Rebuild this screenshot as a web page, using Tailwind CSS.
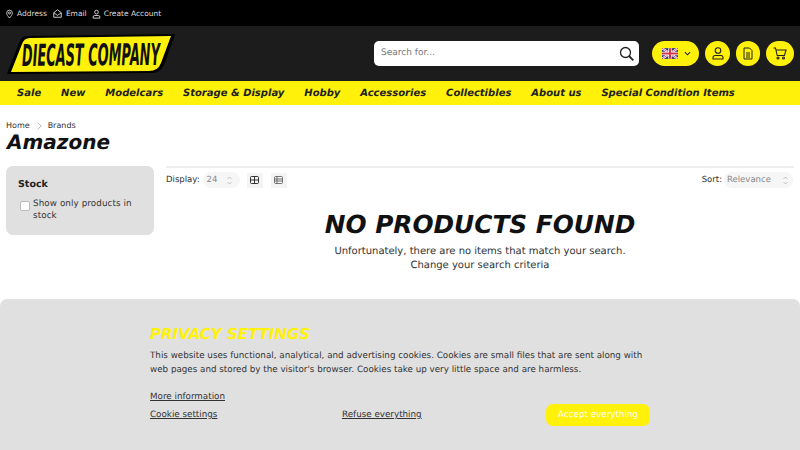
<!DOCTYPE html>
<html><head><meta charset="utf-8"><script src="https://cdn.jsdelivr.net/npm/@tailwindcss/browser@4"></script></head>
<body class="w-[800px] h-[450px] overflow-hidden relative bg-white text-[#222] font-['DejaVu_Sans',sans-serif] [text-rendering:geometricPrecision]">
<div class="h-[26px] bg-black flex items-center pl-[6px] pt-[1px] text-[7.500px] text-[#ddd]">
  <svg class="w-[7px] h-[10px]" viewBox="0 0 10 13" fill="none" stroke="#ddd" stroke-width="1.200"><path d="M5 12.300C3 9.800 1 7.600 1 5a4 4 0 0 1 8 0c0 2.600-2 4.800-4 7.300z"/><circle cx="5" cy="5" r="1.500"/></svg>
  <span class="ml-[4px]">Address</span>
  <svg class="ml-[6px] w-[9px] h-[9px]" viewBox="0 0 12 12" fill="none" stroke="#ddd" stroke-width="1.200"><path d="M1 5l5-4 5 4v6H1z"/><path d="M1 5l5 3.500L11 5"/></svg>
  <span class="ml-[4px]">Email</span>
  <svg class="ml-[5px] w-[9px] h-[10px]" viewBox="0 0 12 12" fill="none" stroke="#ddd" stroke-width="1.200"><circle cx="6" cy="3.500" r="2.500"/><path d="M1.500 11.500V10a2 2 0 0 1 2-2h5a2 2 0 0 1 2 2v1.500z"/></svg>
  <span class="ml-[3px]">Create Account</span>
</div>
<div class="h-[55px] bg-[#1c1c1c] flex items-center pl-[7px] pr-[6px]">
  <svg class="w-[170px] h-[42px] shrink-0 mt-[1px]" viewBox="0 0 170 42">
    <path d="M20 3L168 1L157 32Q153 40 145 40L0 41L12 10Q14 3 20 3Z" fill="#000"/>
    <path d="M23 5L164 3L154 30Q151 38 142 38L4 39L15 11Q17 5 23 5Z" fill="#fff10a"/>
    <text x="0" y="0" transform="translate(15 33) rotate(-0.5) scale(0.43 1)" font-family="DejaVu Sans" font-size="30" font-weight="bold" font-style="italic" fill="#111">DIECAST COMPANY</text>
  </svg>
  <div class="ml-[197px] w-[265px] h-[25px] rounded-[5px] bg-white flex items-center justify-between pl-[7px] pr-[5px] text-[9px] text-[#777]">
    <span class="pt-[1px]">Search for...</span>
    <svg class="w-[15px] h-[15px]" viewBox="0 0 15 15" fill="none" stroke="#222" stroke-width="1.300"><circle cx="6.500" cy="6.500" r="5"/><path d="M10 10l4.300 4.300" stroke-width="1.800"/></svg>
  </div>
  <div class="ml-[13px] w-[47px] h-[25px] rounded-full bg-[#fff10a] flex items-center pl-[10px] gap-[6px]">
    <svg class="w-[16px] h-[11px]" viewBox="0 0 60 40"><rect width="60" height="40" fill="#27337a"/><path d="M0 0L60 40M60 0L0 40" stroke="#fff" stroke-width="8"/><path d="M0 0L60 40M60 0L0 40" stroke="#d03a4e" stroke-width="3"/><path d="M30 0V40M0 20H60" stroke="#fff" stroke-width="13"/><path d="M30 0V40M0 20H60" stroke="#d03a4e" stroke-width="8"/></svg>
    <svg class="w-[7px] h-[5px]" viewBox="0 0 8 5" fill="none" stroke="#222" stroke-width="1.200"><path d="M1 1l3 3 3-3"/></svg>
  </div>
  <div class="ml-[6px] w-[25px] h-[25px] rounded-full bg-[#fff10a] flex items-center justify-center"><svg class="w-[12px] h-[13px]" viewBox="0 0 12 13" fill="none" stroke="#222" stroke-width="1.100"><circle cx="6" cy="3.500" r="2.800"/><path d="M1 12V10.500a2 2 0 0 1 2-2h6a2 2 0 0 1 2 2V12z"/></svg></div>
  <div class="ml-[6px] w-[24px] h-[25px] rounded-full bg-[#fff10a] flex items-center justify-center"><svg class="w-[10px] h-[13px]" viewBox="0 0 10 13" fill="none" stroke="#222" stroke-width="1"><path d="M1 1h5.500L9 3.500V12H1zM3 6h4M3 8h4M3 10h4"/></svg></div>
  <div class="ml-[6px] w-[28px] h-[25px] rounded-full bg-[#fff10a] flex items-center justify-center"><svg class="w-[14px] h-[13px]" viewBox="0 0 14 13" fill="none" stroke="#222" stroke-width="1.100"><path d="M.5 1h2l1.700 7.500h7.300L13 3H3"/><circle cx="5" cy="11" r="1"/><circle cx="10.500" cy="11" r="1"/></svg></div>
</div>
<nav class="h-[24px] bg-[#fff10a] flex items-center pl-[17px] pt-[1px] gap-[19.900px] text-[10px] font-bold italic text-[#222] whitespace-nowrap">
  <span>Sale</span><span>New</span><span>Modelcars</span><span>Storage &amp; Display</span><span>Hobby</span><span>Accessories</span><span>Collectibles</span><span>About us</span><span>Special Condition Items</span>
</nav>
<div class="pl-[6px] pr-[6px]">
  <div class="h-[12px] mt-[14px] flex items-center gap-[6px] text-[8px] text-[#333] pt-[1px]"><span>Home</span><svg class="w-[5px] h-[8px] ml-[1px]" viewBox="0 0 6 9" fill="none" stroke="#aaa"><path d="M1 .5l4 4-4 4"/></svg><span>Brands</span></div>
  <h1 class="text-[20px] leading-[24px] -mt-[1px] font-bold italic text-[#111] pl-[1px]">Amazone</h1>
  <div class="flex gap-[12px] mt-[12px]">
    <aside class="w-[148px] h-[69px] shrink-0 rounded-[7px] bg-[#e0e0e0] pl-[12px] pt-[12px]">
      <div class="text-[9.500px] font-bold leading-[14px] text-[#222]">Stock</div>
      <div class="flex mt-[7px] pl-[2px] text-[8.750px] leading-[11px] text-[#333]">
        <span class="w-[10px] h-[10px] mt-[2px] rounded-[2px] bg-white border border-[#bbb] shrink-0 mr-[3px]"></span>
        <span class="w-[100px] leading-[11.500px] tracking-[0.1px]">Show only products in stock</span>
      </div>
    </aside>
    <main class="flex-1">
      <div class="border-t-2 border-[#eee] h-[26px] flex items-center justify-between text-[8.500px] text-[#333]">
        <div class="flex items-center">
          <span>Display:</span>
          <div class="ml-[3px] w-[37px] h-[16px] rounded-full bg-[#f6f6f6] flex items-center pl-[4px] text-[#888]"><span>24</span><svg class="ml-[10px] w-[5px] h-[9px]" viewBox="0 0 5 9" fill="none" stroke="#aaa" stroke-width=".7"><path d="M.5 3l2-2 2 2M.5 6l2 2 2-2"/></svg></div>
          <div class="ml-[7px] w-[16px] h-[15px] bg-[#f4f4f4] flex items-center justify-center"><svg class="w-[9px] h-[8px]" viewBox="0 0 9 8" fill="none" stroke="#222" stroke-width=".9"><rect x=".5" y=".5" width="8" height="7" rx="1"/><path d="M.5 4h8M4.500 .5v7"/></svg></div>
          <div class="ml-[8px] w-[16px] h-[15px] bg-[#f4f4f4] flex items-center justify-center"><svg class="w-[9px] h-[8px]" viewBox="0 0 9 8" fill="none" stroke="#555" stroke-width=".8"><rect x=".5" y=".5" width="8" height="7" rx="1"/><path d="M.5 3h8M.5 5h8M3 .5v7"/></svg></div>
        </div>
        <div class="flex items-center">
          <span>Sort:</span>
          <div class="ml-[2px] w-[69px] h-[16px] rounded-full bg-[#f6f6f6] flex items-center pl-[3px] text-[#888] mr-[1px]"><span>Relevance</span><svg class="ml-auto mr-[5px] w-[5px] h-[9px]" viewBox="0 0 5 9" fill="none" stroke="#aaa" stroke-width=".7"><path d="M.5 3l2-2 2 2M.5 6l2 2 2-2"/></svg></div>
        </div>
      </div>
      <div class="text-center mt-[16px]">
        <div class="text-[24.800px] leading-[34px] font-bold italic text-[#111]">NO PRODUCTS FOUND</div>
        <div class="text-[10px] leading-[14px] mt-[3px] text-[#333]">Unfortunately, there are no items that match your search.</div>
        <div class="text-[10px] leading-[14px] text-[#333]">Change your search criteria</div>
      </div>
    </main>
  </div>
</div>
<div class="absolute left-0 bottom-0 w-[800px] h-[151px] rounded-t-[7px] bg-[#e0e0e0] pl-[150px] pr-[150px] pt-[25px] text-[8.750px] text-[#333]">
  <div class="text-[15px] leading-[20px] font-bold italic text-[#fff10a]">PRIVACY SETTINGS</div>
  <p class="mt-[5px] leading-[14px] whitespace-nowrap">This website uses functional, analytical, and advertising cookies. Cookies are small files that are sent along with<br>web pages and stored by the visitor's browser. Cookies take up very little space and are harmless.</p>
  <div class="mt-[14px] leading-[13px] underline">More information</div>
  <div class="flex items-center">
    <span class="underline w-[192px] pt-[1px]">Cookie settings</span>
    <span class="underline w-[204px] pt-[1px]">Refuse everything</span>
    <span class="w-[104px] h-[22px] rounded-[7px] bg-[#fff10a] text-white flex items-center justify-center pt-[1px]">Accept everything</span>
  </div>
</div>
</body></html>
